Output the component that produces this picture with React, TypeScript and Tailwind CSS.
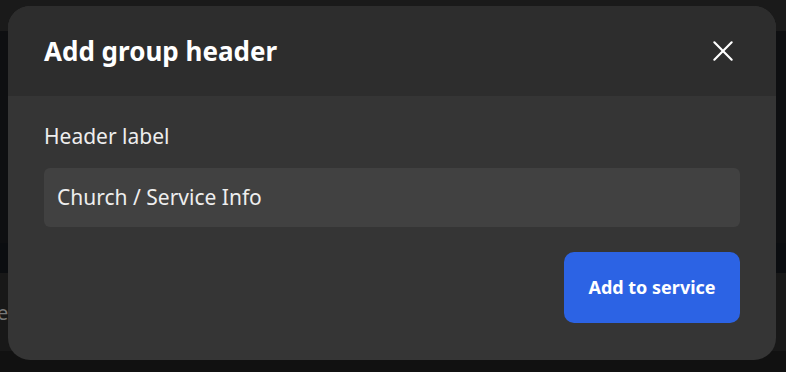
export default function App() {
  return (
    <div className="relative h-[372px] w-[786px] overflow-hidden bg-[#131313] font-['Noto_Sans',sans-serif]">
      {/* dimmed page behind the dialog */}
      <div className="flex h-full flex-col">
        <div className="h-[31px] bg-[#1a1a1a]" />
        <div className="h-[212px] bg-[#0e0f11]" />
        <div className="h-[30px] bg-[#0b0d10]" />
        <div className="flex h-[78px] items-center bg-[#181818] pt-[2px] text-[20px] text-[#777]">
          <span className="ml-[-3px]">e</span>
        </div>
        <div className="flex-1 bg-[#111]" />
      </div>

      <div className="absolute left-[8px] top-[6px] flex h-[354px] w-[768px] flex-col overflow-hidden rounded-[22px] bg-[#353535]">
        <div className="flex h-[90px] items-center justify-between bg-[#2d2d2d] pl-[36px] pr-[40px]">
          <h2 className="text-[26px] font-bold text-white">Add group header</h2>
          <button className="text-white">
            <svg width="26" height="26" viewBox="0 0 24 24" fill="none" stroke="currentColor" strokeWidth="2" strokeLinecap="round">
              <path d="M4 4L20 20M20 4L4 20" />
            </svg>
          </button>
        </div>
        <div className="flex flex-1 flex-col px-[36px] pt-[25px]">
          <label className="text-[21px] leading-[30px] text-[#eeeeee]">Header label</label>
          <div className="mt-[17px] flex h-[59px] items-center rounded-[6px] bg-[#414141] px-[13px] text-[21px] text-[#eeeeee]">
            Church / Service Info
          </div>
          <div className="mt-[25px] flex justify-end">
            <button className="h-[71px] w-[176px] rounded-[10px] bg-[#2c63e4] text-[18px] font-bold text-white">
              Add to service
            </button>
          </div>
        </div>
      </div>
    </div>
  );
}
